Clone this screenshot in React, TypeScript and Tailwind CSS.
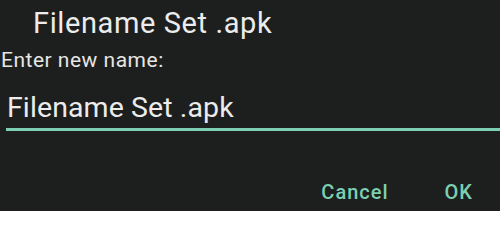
import React from "react";

export default function App() {
  return (
    <div
      className="w-[500px] h-[211px] overflow-hidden bg-[#1c1f1e] flex flex-col"
      style={{ fontFamily: "Roboto, 'Noto Sans', sans-serif" }}
    >
      <div className="mt-[3px] h-[40px] leading-[40px] text-[29px] tracking-[0.6px] pl-[33px] text-[#ececec] whitespace-nowrap">
        Filename Set .apk
      </div>
      <div className="mt-[4.5px] h-[24px] leading-[24px] text-[21px] tracking-[0.5px] pl-[1px] text-[#e6e6e6] whitespace-nowrap">
        Enter new name:
      </div>
      <div className="mt-[18.75px] ml-[6px] pb-[2px] border-b-[3px] border-[#7ccfb1]">
        <div className="h-[36px] leading-[36px] text-[28.5px] tracking-[0.1px] pl-[1px] text-[#ececec] whitespace-nowrap">
          Filename Set .apk
        </div>
      </div>
      <div className="mt-[49px] h-[24px] flex justify-end items-center pr-[27px] gap-[56px] text-[20px] leading-[24px] tracking-[1px] font-medium text-[#7ccfb1]">
        <span>Cancel</span>
        <span>OK</span>
      </div>
    </div>
  );
}
